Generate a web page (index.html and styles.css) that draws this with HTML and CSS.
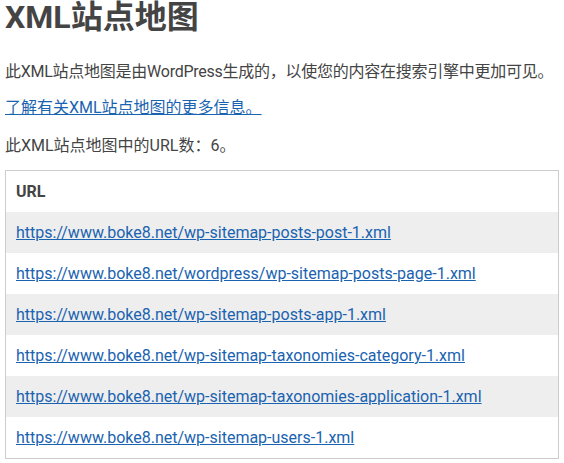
FILE: index.html
```html
<!DOCTYPE html>
<html lang="zh-CN">
<head>
  <meta charset="UTF-8">
  <title>XML站点地图</title>
  <link rel="stylesheet" href="styles.css">
</head>
<body>
  <div id="sitemap">
    <div id="sitemap__header">
      <h1>XML站点地图</h1>
      <p class="intro">此XML站点地图是由WordPress生成的，以使您的内容在搜索引擎中更加可见。</p>
      <p class="more"><a href="#">了解有关XML站点地图的更多信息。</a></p>
    </div>
    <div id="sitemap__content">
      <p class="text">此XML站点地图中的URL数：6。</p>
      <table id="sitemap__table">
        <thead>
          <tr><th class="loc">URL</th></tr>
        </thead>
        <tbody>
          <tr><td class="loc"><a href="#">https://www.boke8.net/wp-sitemap-posts-post-1.xml</a></td></tr>
          <tr><td class="loc"><a href="#">https://www.boke8.net/wordpress/wp-sitemap-posts-page-1.xml</a></td></tr>
          <tr><td class="loc"><a href="#">https://www.boke8.net/wp-sitemap-posts-app-1.xml</a></td></tr>
          <tr><td class="loc"><a href="#">https://www.boke8.net/wp-sitemap-taxonomies-category-1.xml</a></td></tr>
          <tr><td class="loc"><a href="#">https://www.boke8.net/wp-sitemap-taxonomies-application-1.xml</a></td></tr>
          <tr><td class="loc"><a href="#">https://www.boke8.net/wp-sitemap-users-1.xml</a></td></tr>
        </tbody>
      </table>
    </div>
  </div>
</body>
</html>
```

FILE: styles.css
```css
body {
  margin: 0 5px;
  font-family: Roboto, "Noto Sans CJK SC", sans-serif;
  font-size: 16px;
  color: #444;
  background: #fff;
}

#sitemap {
  max-width: 980px;
  margin: 0 auto;
}

h1 {
  font-size: 32px;
  line-height: 34px;
  margin: 0 0 27px;
  font-weight: bold;
}

p {
  margin: 0;
  line-height: 21px;
}

.intro {
  margin-bottom: 15px;
  white-space: nowrap;
  letter-spacing: -0.25px;
}

.more {
  margin-bottom: 17px;
}

.text {
  margin-bottom: 14px;
}

a {
  color: #1a63b0;
}

a:hover {
  text-decoration: none;
}

#sitemap__table {
  width: 100%;
  border: solid 1px #ccc;
  border-collapse: separate;
  border-spacing: 0;
}

#sitemap__table tr th {
  text-align: left;
}

#sitemap__table tr td,
#sitemap__table tr th {
  padding: 10px;
  line-height: 21px;
}

#sitemap__table tbody tr:nth-child(odd) td {
  background-color: #eee;
}
```
